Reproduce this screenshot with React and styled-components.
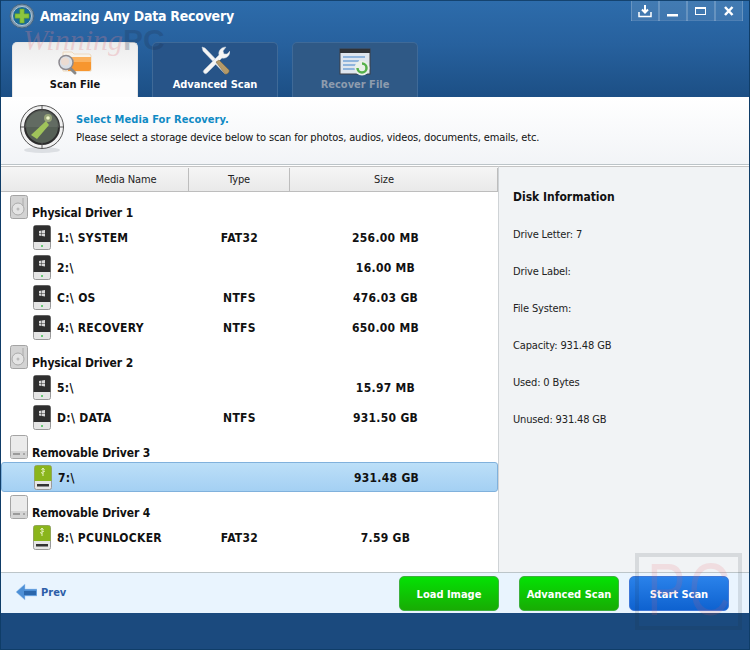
import React from 'react';
import styled, { createGlobalStyle } from 'styled-components';

const font = '"DejaVu Sans Condensed", "DejaVu Sans", sans-serif';

const groups = [
  {
    name: 'Physical Driver 1',
    kind: 'hdd',
    drives: [
      { name: '1:\\ SYSTEM', type: 'FAT32', size: '256.00 MB' },
      { name: '2:\\', type: '', size: '16.00 MB' },
      { name: 'C:\\ OS', type: 'NTFS', size: '476.03 GB' },
      { name: '4:\\ RECOVERY', type: 'NTFS', size: '650.00 MB' },
    ],
  },
  {
    name: 'Physical Driver 2',
    kind: 'hdd',
    drives: [
      { name: '5:\\', type: '', size: '15.97 MB' },
      { name: 'D:\\ DATA', type: 'NTFS', size: '931.50 GB' },
    ],
  },
  {
    name: 'Removable Driver 3',
    kind: 'usb',
    drives: [{ name: '7:\\', type: '', size: '931.48 GB', selected: true }],
  },
  {
    name: 'Removable Driver 4',
    kind: 'usb',
    drives: [{ name: '8:\\ PCUNLOCKER', type: 'FAT32', size: '7.59 GB' }],
  },
];

const diskInfo = [
  'Drive Letter: 7',
  'Drive Label:',
  'File System:',
  'Capacity: 931.48 GB',
  'Used: 0 Bytes',
  'Unused: 931.48 GB',
];

const AppLogo = () => (
  <svg width="26" height="26" viewBox="0 0 26 26">
    <circle cx="13" cy="13" r="12" fill="#7f97ad" stroke="#44647f" />
    <circle cx="13" cy="13" r="9.500" fill="#1b6a98" stroke="#b5cad9" />
    <path d="M10.800 6h4.400v4.800H20v4.400h-4.800V20h-4.400v-4.800H6v-4.400h4.800z" fill="#8cc63f" stroke="#5b9a1e" strokeWidth=".5" />
  </svg>
);

const ScanFileIcon = () => (
  <svg width="34" height="26" viewBox="0 0 34 26">
    <path d="M5 2h9l2 2h15a2 2 0 0 1 2 2v15H5z" fill="#f8f3ea" stroke="#ecd9c0" />
    <path d="M10 7h23v12a2 2 0 0 1-2 2H10z" fill="#f7962f" />
    <path d="M10 7h23v5H10z" fill="#fbb25f" />
    <path d="M11 17l6 6" stroke="#888" strokeWidth="3" strokeLinecap="round" />
    <circle cx="8" cy="12.500" r="7" fill="#d9dfe6" stroke="#8d8a90" strokeWidth="1.500" />
    <circle cx="7" cy="11.500" r="4" fill="#ecdcd2" />
  </svg>
);

const ToolsIcon = () => (
  <svg width="30" height="30" viewBox="0 0 30 30">
    <path d="M2 1l3 1 22 23-2 3L3 5z" fill="#f4f4f4" stroke="#c8d0d8" strokeWidth=".5" />
    <path d="M4 24L19 9c-1-4 2-8 7-8l-3 4 1 3 3 0 3-3c0 5-4 8-8 7L7 27a2 2 0 0 1-3-3z" fill="#f5f5f5" stroke="#c2ccd6" strokeWidth=".5" />
    <path d="M16 16l3-2 10 10c1 2-2 5-4 4z" fill="#b59a68" stroke="#75603a" strokeWidth=".5" />
  </svg>
);

const RecoverIcon = () => (
  <svg width="32" height="28" viewBox="0 0 32 28">
    <rect x="1" y="1" width="30" height="25" fill="#dfe6ee" stroke="#3c3f44" />
    <rect x="1" y="1" width="30" height="4" fill="#2f3236" />
    <path d="M4 8h22v2H4zM4 12h16v2H4zM4 16h14v2H4zM4 20h12v2H4z" fill="#8fb4dc" />
    <circle cx="23" cy="20" r="7.500" fill="#e9efe9" />
    <path d="M23 15.500a4.500 4.500 0 1 1-4.500 4.500" fill="none" stroke="#55b04a" strokeWidth="2.500" />
  </svg>
);

const RadarIcon = () => (
  <svg width="46" height="50" viewBox="0 0 46 50">
    <ellipse cx="23" cy="46" rx="18" ry="3" fill="#dcdfe3" />
    <circle cx="23" cy="23" r="21.500" fill="#f1f1f1" stroke="#555" />
    <circle cx="23" cy="23" r="17" fill="#555f55" stroke="#2c2c2c" strokeWidth="2" />
    <path d="M23 6a17 17 0 0 1 17 17H6a17 17 0 0 1 17-17z" fill="#6a736a" opacity=".6" />
    <path d="M23 1v7M23 38v7M1 23h7M38 23h7" stroke="#555" />
    <path d="M12 31L27 17l3 4-12 14z" fill="#9fc35a" />
    <circle cx="29" cy="14" r="4" fill="#c9dc8c" opacity=".5" />
    <circle cx="29" cy="14" r="1.800" fill="#eef6c8" />
  </svg>
);

const DiskIcon = ({ removable }) => (
  <svg width="18" height="24" viewBox="0 0 18 24">
    <rect x=".5" y=".5" width="17" height="23" rx="2" fill={removable ? '#ebebeb' : '#d3d3d3'} stroke="#a4a4a4" />
    {removable ? (
      <>
        <path d="M1 16h16v7H1z" fill="#d4d4d4" />
        <path d="M3 19h7" stroke="#888" strokeWidth="1.500" />
        <circle cx="14" cy="19" r="1" fill="#999" />
      </>
    ) : (
      <>
        <circle cx="8" cy="14" r="6" fill="#e4e4e4" stroke="#aaa" />
        <circle cx="8" cy="14" r="1.500" fill="#bbb" />
        <path d="M13 3v8" stroke="#aaa" />
      </>
    )}
  </svg>
);

const SystemDriveIcon = () => (
  <svg width="18" height="25" viewBox="0 0 18 25">
    <rect x=".5" y=".5" width="17" height="24" rx="2" fill="#e6e6e6" stroke="#999" />
    <path d="M.5 17V2.500a2 2 0 0 1 2-2h13a2 2 0 0 1 2 2V17z" fill="#2f2f2f" />
    <path d="M6 6l2.500-.5v2.500H6zM9 5.500l3-.5v3H9zM6 8.500h2.500V11L6 10.500zM9 8.500h3v3l-3-.5z" fill="#d8d8d8" />
    <path d="M8 21h2" stroke="#3fbf4f" strokeWidth="1.500" />
  </svg>
);

const UsbDriveIcon = () => (
  <svg width="18" height="25" viewBox="0 0 18 25">
    <rect x=".5" y=".5" width="17" height="24" rx="2" fill="#e6e6e6" stroke="#999" />
    <path d="M.5 16V2.500a2 2 0 0 1 2-2h13a2 2 0 0 1 2 2V16z" fill="#8ab51c" />
    <path d="M9 3v8M9 3L7.500 5M9 3l1.500 2M9 7l2-1M9 8.500L7 7.500" stroke="#e8f3c0" fill="none" />
    <rect x="3" y="19" width="12" height="2.500" fill="#333" />
  </svg>
);

const PrevArrow = () => (
  <svg width="21" height="18" viewBox="0 0 21 18">
    <path d="M0 9l9-8v5h12v7H9v4z" fill="#4d8fd6" stroke="#a9cdf0" strokeWidth=".5" />
    <path d="M8 8h12v4H8z" fill="#2a66ac" />
  </svg>
);

const DownloadGlyph = () => (
  <svg width="14" height="14" viewBox="0 0 14 14" fill="none" stroke="#fff" strokeWidth="2">
    <path d="M7 1v7M4 5.500L7 8.500l3-3" />
    <path d="M1 8v4.500h12V8" strokeWidth="1.500" />
  </svg>
);

const MinGlyph = () => (
  <svg width="12" height="14" viewBox="0 0 12 14">
    <rect x="0" y="10" width="11" height="2.500" fill="#fff" />
  </svg>
);

const MaxGlyph = () => (
  <svg width="12" height="14" viewBox="0 0 12 14" fill="none">
    <rect x=".5" y="3.500" width="10" height="7" stroke="#fff" />
    <rect x="0" y="3" width="11" height="2" fill="#fff" />
  </svg>
);

const CloseGlyph = () => (
  <svg width="12" height="14" viewBox="0 0 12 14" stroke="#fff" strokeWidth="2.500">
    <path d="M2 3l7.500 8M9.500 3L2 11" />
  </svg>
);

const App = () => (
  <>
    <GlobalStyle />
    <Window>
      <TitleBar>
        <TitleRow>
          <AppLogo />
          <AppTitle>Amazing Any Data Recovery</AppTitle>
        </TitleRow>
        <Controls>
          <ControlButton><DownloadGlyph /></ControlButton>
          <ControlButton><MinGlyph /></ControlButton>
          <ControlButton><MaxGlyph /></ControlButton>
          <ControlButton><CloseGlyph /></ControlButton>
        </Controls>
        <Tabs>
          <Tab $active>
            <ScanFileIcon />
            Scan File
          </Tab>
          <Tab>
            <ToolsIcon />
            Advanced Scan
          </Tab>
          <Tab $disabled>
            <RecoverIcon />
            Recover File
          </Tab>
        </Tabs>
        <TopWatermark>Winning<TopWatermarkPc>PC</TopWatermarkPc></TopWatermark>
      </TitleBar>

      <Intro>
        <RadarIcon />
        <IntroText>
          <IntroHeading>Select Media For Recovery.</IntroHeading>
          <IntroBody>Please select a storage device below to scan for photos, audios, videos, documents, emails, etc.</IntroBody>
        </IntroText>
      </Intro>

      <Content>
        <ListPanel>
          <HeaderRow>
            <HeaderCell $first>Media Name</HeaderCell>
            <HeaderCell>Type</HeaderCell>
            <HeaderCell $last>Size</HeaderCell>
          </HeaderRow>
          {groups.map((group) => (
            <div key={group.name}>
              <GroupRow>
                <DiskIcon removable={group.kind === 'usb'} />
                <GroupName>{group.name}</GroupName>
              </GroupRow>
              {group.drives.map((drive) => (
                <DriveRow key={drive.name} $selected={drive.selected}>
                  <DriveName>
                    {group.kind === 'usb' ? <UsbDriveIcon /> : <SystemDriveIcon />}
                    <span>{drive.name}</span>
                  </DriveName>
                  <DriveType>{drive.type}</DriveType>
                  <DriveSize>{drive.size}</DriveSize>
                </DriveRow>
              ))}
            </div>
          ))}
        </ListPanel>
        <InfoPanel>
          <InfoTitle>Disk Information</InfoTitle>
          {diskInfo.map((line) => (
            <InfoLine key={line}>{line}</InfoLine>
          ))}
        </InfoPanel>
      </Content>

      <Footer>
        <PrevLink>
          <PrevArrow />
          Prev
        </PrevLink>
        <FooterButton $color="green" $gap="20px">Load Image</FooterButton>
        <FooterButton $color="green" $gap="10px">Advanced Scan</FooterButton>
        <FooterButton $color="blue">Start Scan</FooterButton>
      </Footer>
      <BottomBar />
      <BottomWatermark><BottomWatermarkText>PC</BottomWatermarkText></BottomWatermark>
    </Window>
  </>
);

export default App;

const GlobalStyle = createGlobalStyle`
  html, body {
    margin: 0;
    padding: 0;
    background: #fff;
  }
  * {
    box-sizing: border-box;
  }
`;

const Window = styled.div`
  position: relative;
  width: 750px;
  height: 650px;
  display: flex;
  flex-direction: column;
  overflow: hidden;
  font-family: ${font};
  border: 1px solid #0f3d68;
  border-top: 0;
  color: #111;
`;

const TitleBar = styled.div`
  position: relative;
  height: 97px;
  flex: none;
  padding: 2px 0 0 8px;
  background: linear-gradient(#2d6cab 0%, #27619e 45%, #1c4f85 100%);
  border-top: 1px solid #14436f;
`;

const TitleRow = styled.div`
  display: flex;
  align-items: center;
  gap: 5px;
  height: 26px;
`;

const AppTitle = styled.div`
  color: #fff;
  font-size: 14px;
  font-weight: 700;
  letter-spacing: -0.25px;
`;

const Controls = styled.div`
  position: absolute;
  top: 0;
  right: 6px;
  display: flex;
  height: 20px;
  background: rgba(255, 255, 255, 0.1);
  border-bottom: 1px solid rgba(255, 255, 255, 0.08);
`;

const ControlButton = styled.div`
  width: 28px;
  height: 20px;
  display: flex;
  align-items: center;
  justify-content: center;
  border-left: 1px solid rgba(255, 255, 255, 0.2);
  border-right: 1px solid rgba(255, 255, 255, 0.2);
`;

const Tabs = styled.div`
  display: flex;
  gap: 14px;
  margin: 13px 0 0 3px;
`;

const Tab = styled.div`
  width: 126px;
  height: 55px;
  display: flex;
  flex-direction: column;
  align-items: center;
  justify-content: flex-end;
  gap: 2px;
  padding-bottom: 6px;
  border-radius: 5px 5px 0 0;
  font-size: 11px;
  font-weight: 700;
  color: ${(p) => (p.$active ? '#111' : p.$disabled ? '#8d9cae' : '#fff')};
  background: ${(p) =>
    p.$active ? 'linear-gradient(#ececec, #fdfdfd 70%)' : p.$disabled ? '#2f5986' : '#275488'};
  border: 1px solid ${(p) => (p.$active ? '#e6e6e6' : '#3f6a98')};
  border-bottom: 0;
`;

const TopWatermark = styled.div`
  position: absolute;
  left: 22px;
  top: 26px;
  font-family: "Liberation Serif", serif;
  font-style: italic;
  font-size: 30px;
  line-height: 26px;
  color: rgba(230, 130, 140, 0.28);
  pointer-events: none;
`;

const TopWatermarkPc = styled.span`
  font-family: "Liberation Sans", sans-serif;
  font-style: normal;
  font-weight: 700;
  color: rgba(30, 50, 80, 0.25);
`;

const Intro = styled.div`
  height: 68px;
  flex: none;
  display: flex;
  align-items: flex-start;
  gap: 11px;
  padding: 7px 0 0 18px;
  background: linear-gradient(#fff, #f2f4f7);
  border-bottom: 1px solid #bcc4c8;
`;

const IntroText = styled.div`
  padding-top: 8px;
`;

const IntroHeading = styled.div`
  color: #0f8ac4;
  font-size: 11px;
  font-weight: 700;
  letter-spacing: 0.08px;
  line-height: 16px;
`;

const IntroBody = styled.div`
  font-size: 11px;
  letter-spacing: -0.15px;
  line-height: 20px;
`;

const Content = styled.div`
  flex: 1;
  display: flex;
  margin-top: 1px;
`;

const ListPanel = styled.div`
  width: 497px;
  background: #fff;
`;

const HeaderRow = styled.div`
  display: grid;
  grid-template-columns: 188px 101px 208px;
  height: 26px;
  padding-top: 1px;
  background: linear-gradient(#f5f5f5, #e9e9e9);
  border-top: 1px solid #c4c4c4;
  border-bottom: 1px solid #bdbdbd;
`;

const HeaderCell = styled.div`
  display: flex;
  align-items: center;
  justify-content: center;
  font-size: 11px;
  letter-spacing: -0.1px;
  color: #222;
  padding: ${(p) => (p.$first ? '0 0 0 63px' : p.$last ? '0 19px 0 0' : '0')};
  border-right: 1px solid #bdbdbd;
`;

const GroupRow = styled.div`
  display: flex;
  align-items: flex-start;
  gap: 4px;
  height: 25px;
  margin-top: 5px;
  padding-left: 9px;
  & > svg {
    margin-top: -2px;
    flex: none;
  }
`;

const GroupName = styled.div`
  font-size: 12px;
  font-weight: 700;
  letter-spacing: -0.1px;
  line-height: 16px;
  padding-top: 8px;
  white-space: nowrap;
`;

const DriveRow = styled.div`
  display: grid;
  grid-template-columns: 188px 101px 208px;
  align-items: center;
  height: 30px;
  font-size: 12px;
  font-weight: 700;
  letter-spacing: 0.3px;
  ${(p) =>
    p.$selected &&
    `
    background: linear-gradient(#bcdff8, #a4d0f3);
    border: 1px solid #80b1dc;
    border-radius: 3px;
  `}
`;

const DriveName = styled.div`
  display: flex;
  align-items: center;
  gap: 6px;
  padding-left: 32px;
  white-space: nowrap;
  & > span {
    padding-top: 2px;
  }
`;

const DriveType = styled.div`
  text-align: center;
  padding-top: 2px;
`;

const DriveSize = styled.div`
  text-align: center;
  padding: 2px 17px 0 0;
`;

const InfoPanel = styled.div`
  flex: 1;
  padding: 22px 0 0 14px;
  background: #f1f3f5;
  border-left: 1px solid #cfd3d6;
  border-top: 1px solid #c4c4c4;
`;

const InfoTitle = styled.div`
  font-size: 12px;
  font-weight: 700;
  line-height: 16px;
  margin-bottom: 11px;
`;

const InfoLine = styled.div`
  font-size: 11px;
  letter-spacing: -0.15px;
  line-height: 37px;
  color: #222;
`;

const Footer = styled.div`
  flex: none;
  height: 41px;
  display: flex;
  align-items: center;
  padding: 1px 20px 0 15px;
  background: #e9f4fe;
  border-top: 1px solid #bcc5c9;
`;

const PrevLink = styled.div`
  display: flex;
  align-items: center;
  gap: 4px;
  margin-right: auto;
  margin-bottom: 3px;
  color: #2d5ea8;
  font-size: 11px;
  font-weight: 700;
`;

const FooterButton = styled.div`
  width: 100px;
  height: 35px;
  display: flex;
  align-items: center;
  justify-content: center;
  margin-right: ${(p) => p.$gap || 0};
  padding-top: 1px;
  border-radius: 5px;
  color: #fff;
  font-size: 11px;
  font-weight: 700;
  background: ${(p) =>
    p.$color === 'green'
      ? 'linear-gradient(#04e104, #18ac04)'
      : 'linear-gradient(#2a82ea, #0e62d0)'};
  border: 1px solid ${(p) => (p.$color === 'green' ? '#3eb03e' : '#3f78d8')};
`;

const BottomBar = styled.div`
  flex: none;
  height: 36px;
  background: #1b4a7e;
`;

const BottomWatermark = styled.div`
  position: absolute;
  left: 634px;
  top: 553px;
  width: 107px;
  height: 77px;
  padding-left: 8px;
  border: 4px solid rgba(30, 40, 50, 0.12);
  pointer-events: none;
`;

const BottomWatermarkText = styled.div`
  font-family: "Liberation Sans", sans-serif;
  font-size: 74px;
  line-height: 66px;
  letter-spacing: 4px;
  white-space: nowrap;
  color: rgba(235, 90, 100, 0.14);
  transform: scaleX(0.78);
  transform-origin: left center;
`;
